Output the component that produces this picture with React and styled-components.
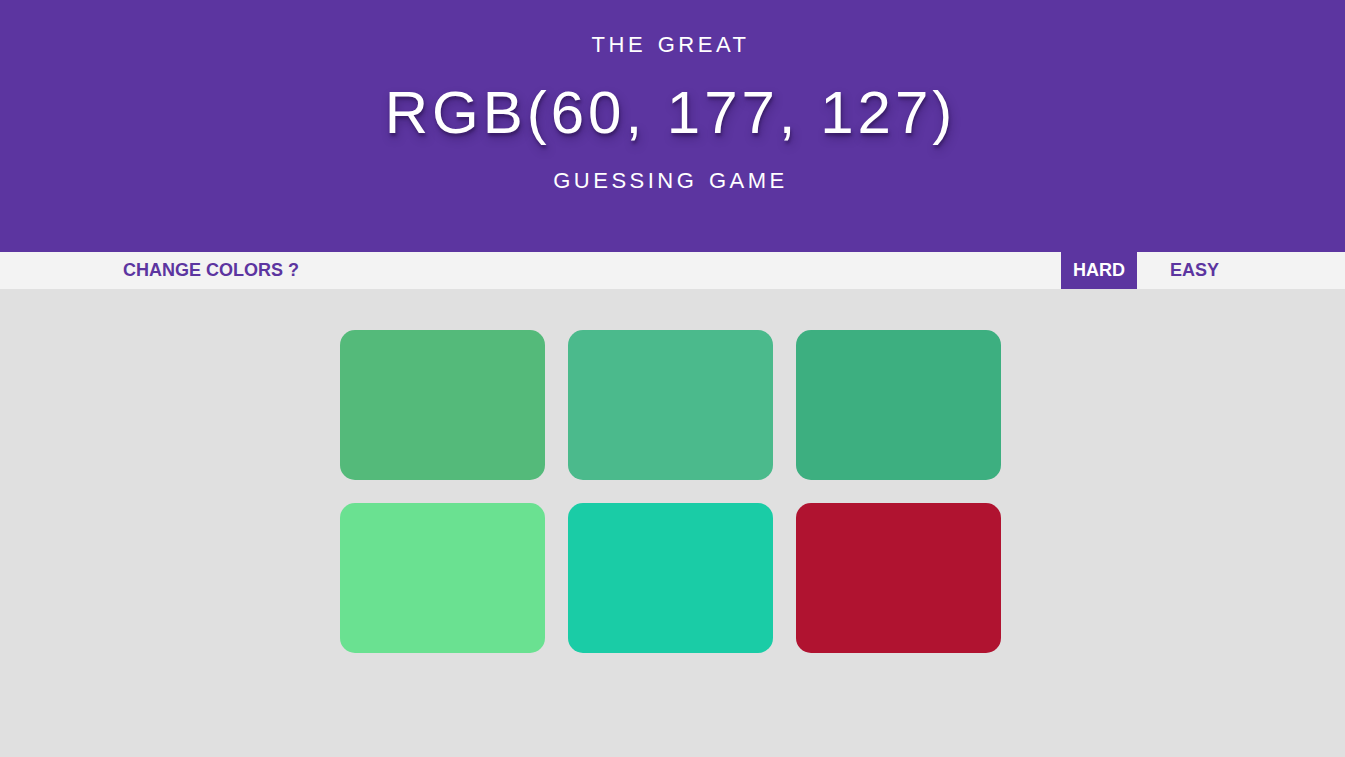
import React from 'react';
import styled, { createGlobalStyle } from 'styled-components';

const purple = '#5c35a0';

const GlobalStyle = createGlobalStyle`
  body {
    margin: 0;
    background: #e0e0e0;
    font-family: "Liberation Sans", Arial, sans-serif;
  }
`
const Header = styled.header`
  background: ${purple};
  color: #fff;
  height: 252px;
  box-sizing: border-box;
  padding: 31px 4px 0 0;
  text-align: center;
`
const Small = styled.div`
  font-size: 22px;
  letter-spacing: 3.5px;
  word-spacing: 2px;
  line-height: 28px;
`
const Big = styled.div`
  font-size: 60px;
  letter-spacing: 4px;
  line-height: 68px;
  margin: 20px 0 20px;
  text-shadow: 1px 3px 3px rgba(30, 10, 60, 0.45), 2px 5px 10px rgba(30, 10, 60, 0.35);
`
const Nav = styled.nav`
  background: #f3f3f3;
  height: 37px;
  display: flex;
  align-items: stretch;
  padding: 0 114px 0 111px;
`
const NavButton = styled.button`
  border: none;
  margin: 0;
  font: bold 18px "Liberation Sans", Arial, sans-serif;
  padding: 0 12px;
  background: ${({ active }) => (active ? purple : 'transparent')};
  color: ${({ active }) => (active ? '#fff' : purple)};
  cursor: pointer;
`
const Spacer = styled.div`
  flex: 1;
`
const Gap = styled.div`
  width: 21px;
`
const Board = styled.main`
  display: grid;
  grid-template-columns: repeat(3, 205px);
  grid-auto-rows: 150px;
  gap: 23px;
  justify-content: center;
  padding: 41px 4px 0 0;
`
const Square = styled.div`
  border-radius: 15px;
  background: ${({ color }) => color};
`

const colors = ['#54ba7a', '#4bba8c', '#3daf80', '#6ae191', '#1acca6', '#b01330'];

const App = () => (
  <>
    <GlobalStyle />
    <Header>
      <Small>THE GREAT</Small>
      <Big>RGB(60, 177, 127)</Big>
      <Small>GUESSING GAME</Small>
    </Header>
    <Nav>
      <NavButton>CHANGE COLORS ?</NavButton>
      <Spacer />
      <NavButton active>HARD</NavButton>
      <Gap />
      <NavButton>EASY</NavButton>
    </Nav>
    <Board>
      {colors.map((c, i) => (
        <Square key={i} color={c} />
      ))}
    </Board>
  </>
);

export default App;
